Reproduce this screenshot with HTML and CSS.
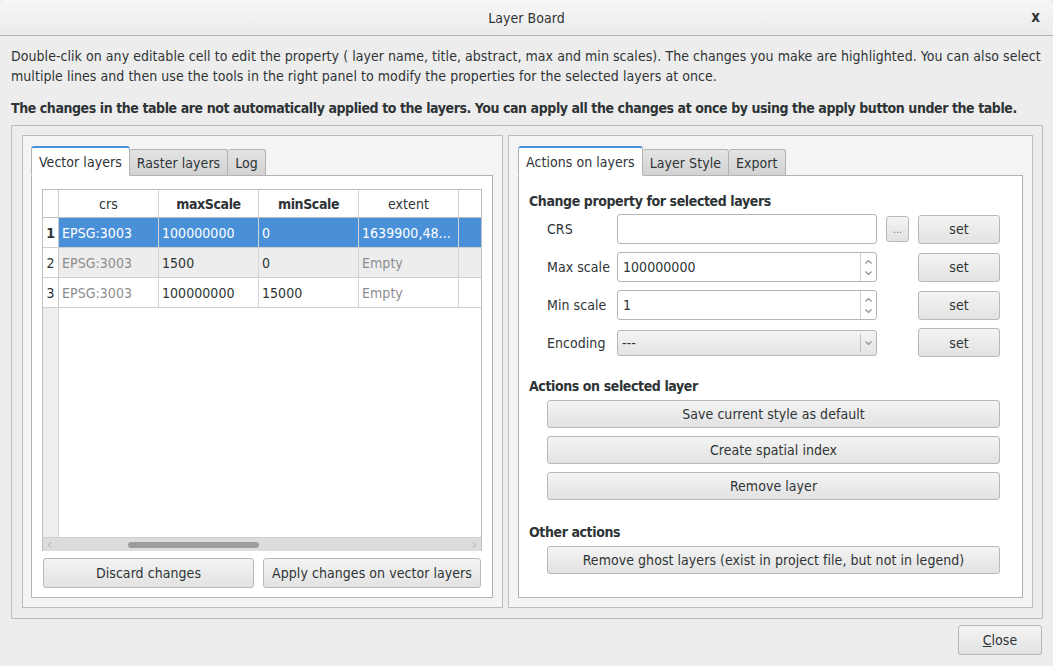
FILE: index.html
```html
<!DOCTYPE html>
<html>
<head>
<meta charset="utf-8">
<link rel="stylesheet" href="styles.css">
</head>
<body>
<div class="window">
  <div class="titlebar">
    <span class="title">Layer Board</span>
    <span class="close-x">x</span>
  </div>
  <div class="content">
    <p class="intro">Double-clik on any editable cell to edit the property ( layer name, title, abstract, max and min scales). The changes you make are highlighted. You can also select multiple lines and then use the tools in the right panel to modify the properties for the selected layers at once.</p>
    <p class="warn">The changes in the table are not automatically applied to the layers. You can apply all the changes at once by using the apply button under the table.</p>
    <div class="frame">
      <div class="group left-group">
        <div class="tabs">
          <div class="tabbar">
            <div class="tab active">Vector layers</div>
            <div class="tab">Raster layers</div>
            <div class="tab">Log</div>
          </div>
          <div class="pane left-pane">
            <div class="table">
              <div class="tbody">
                <div class="trow head">
                  <div class="cell num"></div>
                  <div class="cell">crs</div>
                  <div class="cell b">maxScale</div>
                  <div class="cell b">minScale</div>
                  <div class="cell">extent</div>
                  <div class="cell last"></div>
                </div>
                <div class="trow sel">
                  <div class="cell num b">1</div>
                  <div class="cell l">EPSG:3003</div>
                  <div class="cell l">100000000</div>
                  <div class="cell l">0</div>
                  <div class="cell l">1639900,48...</div>
                  <div class="cell last"></div>
                </div>
                <div class="trow alt">
                  <div class="cell num">2</div>
                  <div class="cell l dim">EPSG:3003</div>
                  <div class="cell l">1500</div>
                  <div class="cell l">0</div>
                  <div class="cell l dim">Empty</div>
                  <div class="cell last"></div>
                </div>
                <div class="trow">
                  <div class="cell num">3</div>
                  <div class="cell l dim">EPSG:3003</div>
                  <div class="cell l">100000000</div>
                  <div class="cell l">15000</div>
                  <div class="cell l dim">Empty</div>
                  <div class="cell last"></div>
                </div>
                <div class="filler"><div class="filler-num"></div></div>
              </div>
              <div class="hscroll">
                <svg class="sarrow" width="6" height="8" viewBox="0 0 6 8"><path d="M4 1.5 L1.5 4 L4 6.5" fill="none" stroke="#a8a8a8" stroke-width="1"/></svg>
                <div class="track"><div class="thumb"></div></div>
                <svg class="sarrow" width="6" height="8" viewBox="0 0 6 8"><path d="M2 1.5 L4.5 4 L2 6.5" fill="none" stroke="#a8a8a8" stroke-width="1"/></svg>
              </div>
            </div>
            <div class="btnrow">
              <button class="btn discard">Discard changes</button>
              <button class="btn apply">Apply changes on vector layers</button>
            </div>
          </div>
        </div>
      </div>
      <div class="group right-group">
        <div class="tabs">
          <div class="tabbar">
            <div class="tab active">Actions on layers</div>
            <div class="tab">Layer Style</div>
            <div class="tab">Export</div>
          </div>
          <div class="pane right-pane">
            <div class="heading">Change property for selected layers</div>
            <div class="form">
              <div class="lbl">CRS</div>
              <div class="input crs"></div>
              <button class="btn dots">...</button>
              <button class="btn set">set</button>

              <div class="lbl">Max scale</div>
              <div class="spin"><span class="val">100000000</span><span class="arrows"><svg width="9" height="6" viewBox="0 0 9 6"><path d="M1.5 4.5 L4.5 1.5 L7.5 4.5" fill="none" stroke="#8c8c8c" stroke-width="1.2"/></svg><svg width="9" height="6" viewBox="0 0 9 6"><path d="M1.5 1.5 L4.5 4.5 L7.5 1.5" fill="none" stroke="#8c8c8c" stroke-width="1.2"/></svg></span></div>
              <div></div>
              <button class="btn set">set</button>

              <div class="lbl">Min scale</div>
              <div class="spin"><span class="val">1</span><span class="arrows"><svg width="9" height="6" viewBox="0 0 9 6"><path d="M1.5 4.5 L4.5 1.5 L7.5 4.5" fill="none" stroke="#8c8c8c" stroke-width="1.2"/></svg><svg width="9" height="6" viewBox="0 0 9 6"><path d="M1.5 1.5 L4.5 4.5 L7.5 1.5" fill="none" stroke="#8c8c8c" stroke-width="1.2"/></svg></span></div>
              <div></div>
              <button class="btn set">set</button>

              <div class="lbl">Encoding</div>
              <div class="combo"><span class="val">---</span><span class="combo-arrow"><svg width="9" height="6" viewBox="0 0 9 6"><path d="M1.5 1.5 L4.5 4.5 L7.5 1.5" fill="none" stroke="#8c8c8c" stroke-width="1.2"/></svg></span></div>
              <div></div>
              <button class="btn set">set</button>
            </div>
            <div class="heading h2">Actions on selected layer</div>
            <div class="actions">
              <button class="btn wide">Save current style as default</button>
              <button class="btn wide">Create spatial index</button>
              <button class="btn wide">Remove layer</button>
            </div>
            <div class="heading h3">Other actions</div>
            <div class="actions">
              <button class="btn wide">Remove ghost layers (exist in project file, but not in legend)</button>
            </div>
          </div>
        </div>
      </div>
    </div>
    <div class="footer">
      <button class="btn close"><u>C</u>lose</button>
    </div>
  </div>
</div>
</body>
</html>
```
FILE: styles.css
```css
* { box-sizing: border-box; }
html, body { margin: 0; padding: 0; }
body {
  width: 1053px;
  height: 666px;
  background: #ededed;
  font-family: "DejaVu Sans Condensed", "DejaVu Sans", sans-serif;
  font-size: 14px;
  letter-spacing: 0.05px;
  color: #2e3436;
  overflow: hidden;
}
.window { width: 1053px; height: 666px; display: flex; flex-direction: column; }
.titlebar {
  height: 36px;
  flex: none;
  background: linear-gradient(#f7f7f7, #ebebeb);
  border-bottom: 1px solid #b6b6b6;
  border-radius: 6px 6px 0 0;
  display: flex;
  align-items: center;
  justify-content: center;
  position: relative;
  font-size: 14px;
}
.title { color: #2e3436; }
.close-x { position: absolute; right: 13px; top: 8px; font-size: 15px; font-weight: 600; color: #2e3436; }
.content { padding: 10px 10px 0 11px; display: flex; flex-direction: column; flex: 1; }
.intro { margin: 0; line-height: 20px; }
.warn { margin: 12px 0 0 0; line-height: 20px; font-weight: bold; white-space: nowrap; }
.b, .warn, .heading { letter-spacing: -0.4px; }
.warn { letter-spacing: -0.42px; }
.frame {
  margin-top: 7px;
  height: 494px;
  border: 1px solid #bcbcbc;
  padding: 9px 9px 10px 10px;
  display: flex;
  gap: 5px;
}
.group {
  flex: none;
  border: 1px solid #bdbdbd;
  background: #f4f4f4;
  padding: 9px 9px 9px 8px;
  display: flex;
  min-width: 0;
}
.left-group { width: 481px; }
.right-group { width: 525px; padding-left: 9px; padding-right: 9px; }
.tabs { display: flex; flex-direction: column; flex: 1; min-width: 0; }
.tabbar { display: flex; align-items: flex-end; height: 30px; position: relative; z-index: 1; }
.tab {
  height: 26px;
  padding: 0 7px;
  border: 1px solid #b3b3b3;
  border-bottom: none;
  border-left: none;
  background: linear-gradient(#e4e4e4, #d2d2d2);
  display: flex;
  align-items: center;
  border-radius: 3px 3px 0 0;
  color: #2e3436;
  white-space: nowrap;
}
.tab.active {
  height: 30px;
  background: #ffffff;
  border: 1px solid #b3b3b3;
  border-top: 2px solid #4a90d9;
  border-bottom: 1px solid #ffffff;
  margin-bottom: -1px;
}
.pane {
  flex: 1;
  min-width: 0;
  background: #ffffff;
  border: 1px solid #b3b3b3;
}
.left-pane { padding: 13px 10px 9px 10px; display: flex; flex-direction: column; }
.table {
  flex: 1;
  width: 440px;
  border: 1px solid #bfbfbf;
  border-bottom: none;
  display: flex;
  flex-direction: column;
  overflow: hidden;
}
.tbody { flex: 1; display: flex; flex-direction: column; min-width: 0; }
.trow { display: flex; height: 30px; border-bottom: 1px solid #cfcfcf; }
.trow.head { height: 28px; border-bottom: 1px solid #bdbdbd; }
.cell {
  width: 100px;
  flex: none;
  border-right: 1px solid #d4d4d4;
  display: flex;
  align-items: center;
  justify-content: center;
  white-space: nowrap;
  overflow: hidden;
}
.cell.l { justify-content: flex-start; padding-left: 3px; }
.cell.num { width: 16px; justify-content: center; border-right: 1px solid #c8c8c8; background: #ffffff; color: #2e3436; }
.cell.last { flex: 1 1 0; width: auto; min-width: 0; border-right: none; }
.b { font-weight: bold; }
.dim { color: #8e8e8e; }
.trow.sel .cell { background: #4a90d9; color: #ffffff; }
.trow.sel .cell.num { background: #ffffff; color: #2e3436; }
.trow.alt .cell { background: #ededed; }
.trow.alt .cell.num { background: #ffffff; }
.filler { flex: 1; display: flex; }
.filler-num { width: 16px; background: #eeeeee; border-right: 1px solid #d9d9d9; }
.hscroll {
  height: 14px;
  background: #dcdcdc;
  border-top: 1px solid #cfcfcf;
  display: flex;
  align-items: center;
  padding: 0 4px;
  gap: 4px;
}
.sarrow { flex: none; }
.track { flex: 1; height: 6px; position: relative; }
.thumb { position: absolute; left: 71px; width: 131px; height: 6px; border-radius: 3px; background: #9d9d9d; }
.btnrow { display: flex; gap: 9px; margin-top: 7px; padding-left: 1px; }
.btn {
  font-family: inherit;
  font-size: 14px;
  letter-spacing: 0.05px;
  color: #2e3436;
  background: linear-gradient(#f4f4f4, #e2e2e2);
  border: 1px solid #b8b8b8;
  border-radius: 3px;
  height: 30px;
  padding: 0;
  white-space: nowrap;
}
.discard { width: 211px; }
.apply { width: 218px; }
.right-pane { padding: 15px 21px 10px 10px; }
.heading { font-weight: bold; height: 20px; line-height: 20px; }
.form {
  display: grid;
  grid-template-columns: 61px 260px 23px 82px;
  column-gap: 9px;
  row-gap: 8px;
  margin: 3px 0 0 18px;
  align-items: center;
}
.lbl { color: #2e3436; white-space: nowrap; }
.input {
  height: 30px;
  border: 1px solid #b6b6b6;
  border-radius: 3px;
  background: #ffffff;
}
.dots { width: 23px; height: 26px; font-size: 11px; color: #777; }
.set { width: 82px; height: 29px; }
.spin {
  height: 30px;
  border: 1px solid #b6b6b6;
  border-radius: 3px;
  background: #ffffff;
  display: flex;
  align-items: center;
}
.spin .val { flex: 1; padding-left: 5px; }
.arrows {
  width: 16px;
  height: 28px;
  border-left: 1px solid #cfcfcf;
  display: flex;
  flex-direction: column;
  align-items: center;
  justify-content: center;
  gap: 5px;
}
.arrows svg { display: block; }
.combo {
  height: 26px;
  border: 1px solid #b6b6b6;
  border-radius: 3px;
  background: linear-gradient(#f4f4f4, #e4e4e4);
  display: flex;
  align-items: center;
}
.combo .val { flex: 1; padding-left: 4px; }
.combo-arrow {
  width: 16px;
  height: 18px;
  border-left: 1px solid #bdbdbd;
  display: flex;
  align-items: center;
  justify-content: center;
}
.h2 { margin-top: 19px; }
.actions { display: flex; flex-direction: column; gap: 8px; margin: 4px 0 0 18px; }
.wide { width: 453px; height: 28px; }
.h3 { margin-top: 22px; }
.footer { display: flex; justify-content: flex-end; padding: 6px 1px 0 0; }
.close { width: 84px; height: 30px; }
```
